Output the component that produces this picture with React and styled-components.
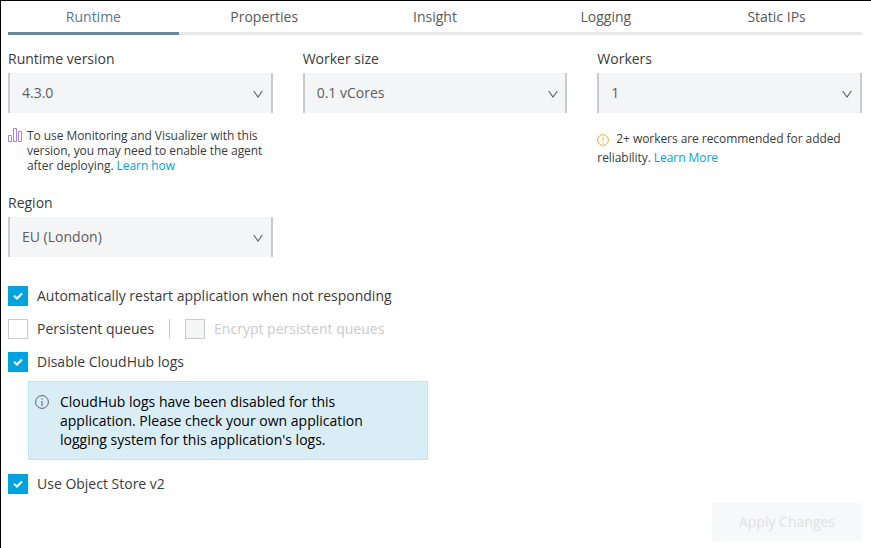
import React from "react";
import styled, { createGlobalStyle } from "styled-components";

const GlobalStyle = createGlobalStyle`
  *, *::before, *::after { box-sizing: border-box; }
  body {
    margin: 0;
    background: #fff;
    color: #3a3b3c;
    font: 14px/19px "Open Sans", "Noto Sans", sans-serif;
  }
`;

const Page = styled.main`
  height: 548px;
  padding: 0 9px 0 7px;
  border-top: 1px solid #000;
  border-left: 1px solid #000;
  overflow: hidden;
`;

const Tabs = styled.nav`
  display: grid;
  grid-template-columns: repeat(5, 1fr);
`;

const Tab = styled.a`
  height: 34px;
  padding-top: 6px;
  text-align: center;
  color: ${(p) => (p.$active ? "#5c7786" : "#58595a")};
  border-bottom: 3px solid ${(p) => (p.$active ? "#6b8a99" : "#e8e9ea")};
`;

const Columns = styled.div`
  display: grid;
  grid-template-columns: repeat(3, 1fr);
  column-gap: 30px;
  height: 144px;
  padding-top: 14px;
`;

const FieldBox = styled.div`
  display: flex;
  flex-direction: column;
`;

const FieldLabel = styled.label`
  display: block;
  height: 24px;
`;

const Select = styled.div`
  display: flex;
  align-items: center;
  justify-content: space-between;
  height: 40px;
  padding: 0 7.500px 1px 12px;
  color: #5c5d5e;
  background: #f4f5f7;
  border: solid #cacbcd;
  border-width: 0 2px;
`;

const Chevron = styled.svg`
  width: 10px;
  height: 8px;
  margin-top: 3px;
`;

const AgentNote = styled.div`
  display: flex;
  margin-top: 15px;
  font-size: 12px;
  line-height: 15px;
  letter-spacing: -0.06px;
`;

const BarsIcon = styled.svg`
  flex: none;
  width: 14px;
  height: 14px;
  margin-right: 5px;
`;

const WorkersNote = styled.div`
  margin-top: 16px;
  font-size: 12px;
  line-height: 19px;
  letter-spacing: -0.065px;
`;

const WarningIcon = styled.svg`
  width: 12px;
  height: 12px;
  margin-right: 7px;
  vertical-align: -3px;
`;

const Link = styled.a`
  color: #00a2df;
`;

const Region = styled.div`
  width: 264.67px;
  margin-top: 14px;
`;

const Options = styled.div`
  display: flex;
  flex-direction: column;
  gap: 13px;
  margin-top: 29px;
`;

const OptionRow = styled.div`
  display: flex;
  align-items: center;
  height: 20px;
`;

const Option = styled.label`
  display: flex;
  align-items: flex-start;
  gap: 9px;
  color: ${(p) => (p.$disabled ? "#cacbcd" : "#3a3b3c")};
`;

const Box = styled.span`
  display: flex;
  align-items: center;
  justify-content: center;
  width: 20px;
  height: 20px;
  border: 1px solid ${(p) => (p.$checked ? "#00a2df" : "#cacbcd")};
  background: ${(p) => (p.$checked ? "#00a2df" : p.$disabled ? "#f4f5f7" : "#fff")};
`;

const Divider = styled.span`
  width: 1px;
  height: 20px;
  margin: 0 15px;
  background: #cacbcd;
`;

const Alert = styled.div`
  display: flex;
  width: 400px;
  height: 79px;
  margin: 9px 0 14px 20px;
  padding: 10px 40px 0 6px;
  color: #000;
  background: #d9edf7;
  border: 1px solid #bce8f1;
`;

const InfoIcon = styled.svg`
  flex: none;
  width: 14px;
  height: 14px;
  margin: 3px 11px 0 0;
`;

const Footer = styled.footer`
  display: flex;
  justify-content: flex-end;
  margin-top: 9px;
`;

const ApplyButton = styled.button`
  width: 150px;
  height: 38px;
  padding: 0 0 1px;
  border: 0;
  font: inherit;
  color: #e0e1e2;
  background: #f7f8fa;
`;

function Field({ label, value }) {
  return (
    <>
      <FieldLabel>{label}</FieldLabel>
      <Select>
        {value}
        <Chevron viewBox="0 0 10 8" fill="none" stroke="#5c5d5e" strokeWidth="1.1">
          <path d="M.7 1 5 7 9.300 1" />
        </Chevron>
      </Select>
    </>
  );
}

function Checkbox({ label, checked, disabled }) {
  return (
    <Option $disabled={disabled}>
      <Box $checked={checked} $disabled={disabled}>
        {checked && (
          <svg width="10" height="8" viewBox="0 0 10 8" fill="none" stroke="#fff" strokeWidth="2.2">
            <path d="M1 3.800 4 6.500 9 1.400" />
          </svg>
        )}
      </Box>
      {label}
    </Option>
  );
}

const tabs = ["Runtime", "Properties", "Insight", "Logging", "Static IPs"];

export default function App() {
  return (
    <>
      <GlobalStyle />
      <Page>
        <Tabs>
          {tabs.map((tab, i) => (
            <Tab key={tab} $active={i === 0}>{tab}</Tab>
          ))}
        </Tabs>
        <Columns>
          <FieldBox>
            <Field label="Runtime version" value="4.3.0" />
            <AgentNote>
              <BarsIcon viewBox="0 0 14 14" fill="none" stroke="#a97ff8">
                <path d="M.5 7.500h3v6h-3zM5.500.5h3v13h-3zM10.500 3.500h3v10h-3z" />
              </BarsIcon>
              <span>
                To use Monitoring and Visualizer with this version, you may need to
                enable the agent after deploying. <Link>Learn how</Link>
              </span>
            </AgentNote>
          </FieldBox>
          <FieldBox>
            <Field label="Worker size" value="0.1 vCores" />
          </FieldBox>
          <FieldBox>
            <Field label="Workers" value="1" />
            <WorkersNote>
              <WarningIcon viewBox="0 0 12 12" fill="none" stroke="#f2a73b">
                <circle cx="6" cy="6" r="5.400" />
                <path d="M6 2.800v4M6 8v1.300" />
              </WarningIcon>
              2+ workers are recommended for added reliability. <Link>Learn More</Link>
            </WorkersNote>
          </FieldBox>
        </Columns>
        <Region>
          <Field label="Region" value="EU (London)" />
        </Region>
        <Options>
          <OptionRow>
            <Checkbox checked label="Automatically restart application when not responding" />
          </OptionRow>
          <OptionRow>
            <Checkbox label="Persistent queues" />
            <Divider />
            <Checkbox disabled label="Encrypt persistent queues" />
          </OptionRow>
          <OptionRow>
            <Checkbox checked label="Disable CloudHub logs" />
          </OptionRow>
        </Options>
        <Alert>
          <InfoIcon viewBox="0 0 14 14" fill="none" stroke="#5c5d5e">
            <circle cx="7" cy="7" r="6.400" />
            <path d="M7 3.300v1.300M7 6v5" />
          </InfoIcon>
          <span>
            CloudHub logs have been disabled for this application. Please check your
            own application logging system for this application's logs.
          </span>
        </Alert>
        <OptionRow>
          <Checkbox checked label="Use Object Store v2" />
        </OptionRow>
        <Footer>
          <ApplyButton disabled>Apply Changes</ApplyButton>
        </Footer>
      </Page>
    </>
  );
}
